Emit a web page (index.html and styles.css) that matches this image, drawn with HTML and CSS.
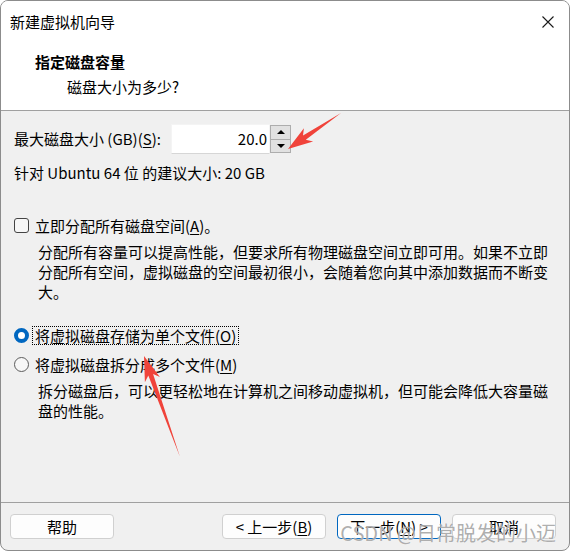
FILE: index.html
```html
<!DOCTYPE html>
<html lang="zh-CN">
<head>
    <meta charset="UTF-8">
    <title>新建虚拟机向导</title>
    <link rel="stylesheet" href="styles.css">
</head>
<body>
    <div class="window">
        <div class="top">
            <div class="titlebar">
                <span class="title">新建虚拟机向导</span>
                <svg class="close" width="12" height="12" viewBox="0 0 12 12">
                    <path d="M0.5 0.5 L11.5 11.5 M11.5 0.5 L0.5 11.5" stroke="#1a1a1a" stroke-width="1.1" fill="none"/>
                </svg>
            </div>
            <div class="header">
                <div class="header-title">指定磁盘容量</div>
                <div class="header-sub">磁盘大小为多少?</div>
            </div>
        </div>

        <div class="content">
            <div class="size-row">
                <label class="size-label">最大磁盘大小 (GB)(<u>S</u>):</label>
                <div class="spin">
                    <div class="spin-input">20.0</div>
                    <div class="spin-buttons">
                        <span class="spin-btn"><i class="tri-up"></i></span>
                        <span class="spin-btn"><i class="tri-down"></i></span>
                    </div>
                </div>
            </div>
            <p class="hint">针对 Ubuntu 64 位 的建议大小: 20 GB</p>

            <div class="option option-check">
                <span class="checkbox"></span>
                <span class="option-label">立即分配所有磁盘空间(<u>A</u>)。</span>
            </div>
            <p class="desc">分配所有容量可以提高性能，但要求所有物理磁盘空间立即可用。如果不立即分配所有空间，虚拟磁盘的空间最初很小，会随着您向其中添加数据而不断变大。</p>

            <div class="option option-single">
                <span class="radio checked"></span>
                <span class="option-label focused">将虚拟磁盘存储为单个文件(<u>O</u>)</span>
            </div>
            <div class="option option-split">
                <span class="radio"></span>
                <span class="option-label">将虚拟磁盘拆分成多个文件(<u>M</u>)</span>
            </div>
            <p class="desc">拆分磁盘后，可以更轻松地在计算机之间移动虚拟机，但可能会降低大容量磁盘的性能。</p>
        </div>

        <div class="footer">
            <button class="btn">帮助</button>
            <span class="spacer"></span>
            <button class="btn">&lt; 上一步(<u>B</u>)</button>
            <button class="btn btn-default">下一步(<u>N</u>) &gt;</button>
            <button class="btn">取消</button>
        </div>

        <!-- red annotation arrows drawn over the dialog -->
        <svg class="annotations" width="570" height="551" viewBox="0 0 570 551">
            <polygon points="341,113 305.8,139.7 313.1,141.4 288,149 303.9,128.2 303,135.6" fill="#f0433a"/>
            <polygon points="180,457 153.1,374 159.9,376.9 144,356 144.9,382.3 148.3,375.6" fill="#f0433a"/>
        </svg>
        <div class="watermark">CSDN @日常脱发的小迈</div>
    </div>
</body>
</html>
```

FILE: styles.css
```css
body {
    margin: 0;
    background: #fff;
    font-family: "Microsoft YaHei UI", "Noto Sans CJK SC", sans-serif;
    font-size: 15px;
    line-height: 20px;
    color: #000;
}

u {
    text-decoration-thickness: 1px;
    text-underline-offset: 2px;
}

.window {
    position: relative;
    width: 570px;
    height: 551px;
    box-sizing: border-box;
    border: 1px solid #8c8c8c;
    border-radius: 8px;
    overflow: hidden;
    display: flex;
    flex-direction: column;
    background: #f0f0f0;
}

/* title bar + white header */
.top {
    background: #fff;
    border-bottom: 1px solid #a0a0a0;
    height: 110px;
    box-sizing: border-box;
    flex: none;
}

.titlebar {
    display: flex;
    align-items: center;
    justify-content: space-between;
    height: 42px;
    padding: 0 15px 0 9px;
}

.header {
    padding: 9px 0 0 34px;
}

.header-title {
    font-weight: 700;
}

.header-sub {
    margin-top: 5px;
    padding-left: 32px;
}

/* main body */
.content {
    flex: 1;
    padding: 13px 12px 0 13px;
}

.size-row {
    display: flex;
    align-items: center;
    height: 30px;
}

.size-label {
    width: 157px;
}

.spin {
    display: flex;
    height: 30px;
}

.spin-input {
    width: 99px;
    box-sizing: border-box;
    background: #fff;
    border: 1px solid #f4f4f4;
    border-bottom-color: #d6d6d6;
    text-align: right;
    padding-right: 2px;
    line-height: 28px;
}

.spin-buttons {
    width: 21px;
    display: flex;
    flex-direction: column;
    padding: 1px 0;
    box-sizing: border-box;
}

.spin-btn {
    flex: 1;
    display: flex;
    align-items: center;
    justify-content: center;
    border: 1px solid #adadad;
    background: #e1e1e1;
}

.spin-btn + .spin-btn {
    border-top: none;
}

.tri-up,
.tri-down {
    width: 0;
    height: 0;
    border-left: 4px solid transparent;
    border-right: 4px solid transparent;
}

.tri-up {
    border-bottom: 4px solid #000;
}

.tri-down {
    border-top: 4px solid #000;
}

.hint {
    margin: 9px 0 0;
}

.option {
    display: flex;
    align-items: center;
    gap: 3px;
    height: 20px;
}

.option-check {
    margin-top: 32px;
}

.option-single {
    margin-top: 23px;
}

.option-split {
    margin-top: 9px;
}

.option-label {
    border: 1px solid transparent;
    padding: 0 2px;
    line-height: 17px;
}

.option-label.focused {
    border: 1px dotted #000;
}

.checkbox {
    width: 15px;
    height: 15px;
    box-sizing: border-box;
    border: 1px solid #444;
    border-radius: 3px;
    background: #f7f7f7;
}

.radio {
    width: 15px;
    height: 15px;
    box-sizing: border-box;
    border: 1px solid #5c5c5c;
    border-radius: 50%;
    background: #f7f7f7;
}

.radio.checked {
    border: 4.5px solid #0067c0;
    background: #fff;
}

.desc {
    margin: 7px 0 0 24px;
}

/* bottom buttons */
.footer {
    flex: none;
    height: 48px;
    box-sizing: border-box;
    border-top: 1px solid #a0a0a0;
    padding: 11px 13px 0 9px;
    display: flex;
    align-items: flex-start;
    gap: 11px;
}

.spacer {
    flex: 1;
}

.btn {
    width: 104px;
    height: 25px;
    box-sizing: border-box;
    border: 1px solid #d0d0d0;
    border-radius: 4px;
    background: #fdfdfd;
    font: inherit;
    line-height: 23px;
    color: #000;
    padding: 0;
    text-align: center;
}

.btn-default {
    border-color: #0067c0;
}

/* overlays */
.annotations {
    position: absolute;
    left: -1px;
    top: -1px;
    pointer-events: none;
}

.watermark {
    position: absolute;
    right: 13px;
    top: 520px;
    font-size: 20px;
    line-height: 24px;
    color: rgba(105, 105, 105, 0.55);
    text-shadow: 0 0 1px #fff;
    pointer-events: none;
}
```
